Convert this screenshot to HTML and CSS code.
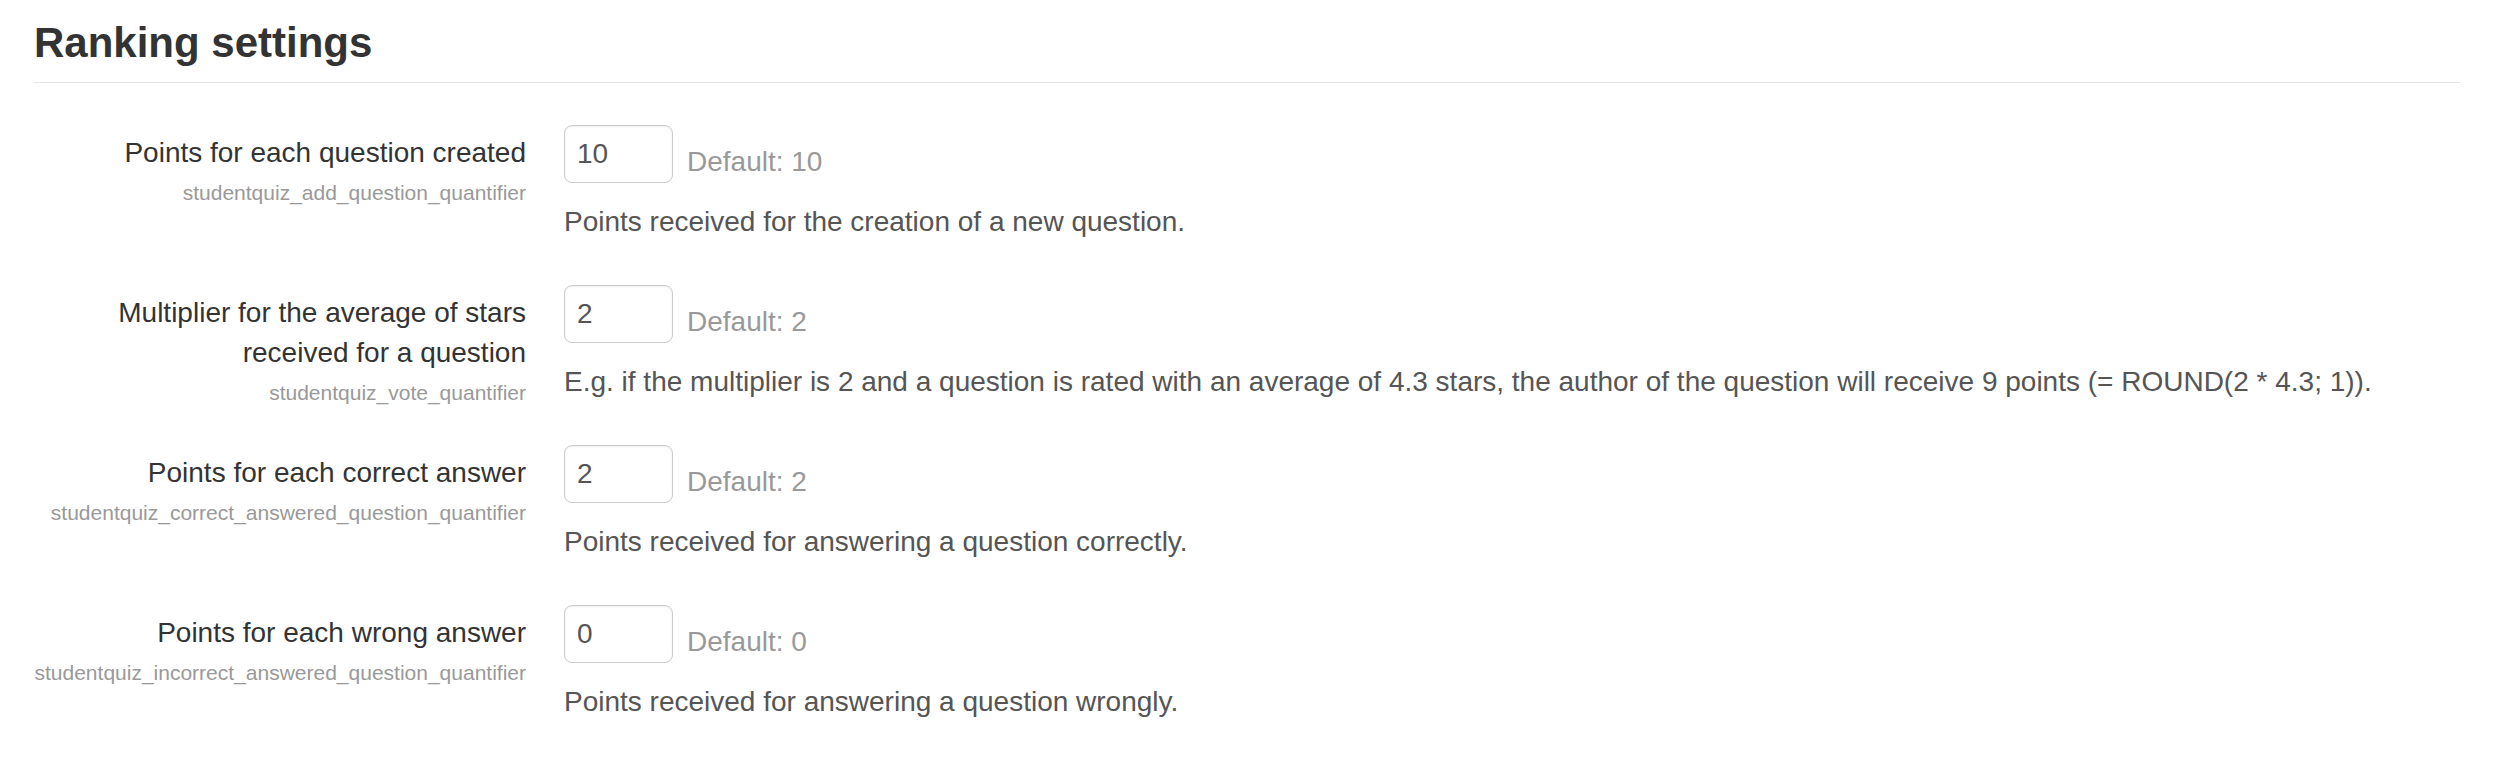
FILE: index.html
```html
<!DOCTYPE html>
<html lang="en">
<head>
<meta charset="utf-8">
<title>Ranking settings</title>
<link rel="stylesheet" href="styles.css">
</head>
<body>
<div class="page">
  <h2 class="section-title">Ranking settings</h2>
  <div class="settings">
    <div class="setting">
      <div class="label-col">
        <label class="label" for="s1">Points for each question created</label>
        <span class="shortname">studentquiz_add_question_quantifier</span>
      </div>
      <div class="field-col">
        <div class="field-line">
          <input class="num" id="s1" type="text" value="10">
          <span class="default">Default: 10</span>
        </div>
        <div class="desc">Points received for the creation of a new question.</div>
      </div>
    </div>
    <div class="setting">
      <div class="label-col">
        <label class="label" for="s2">Multiplier for the average of stars received for a question</label>
        <span class="shortname">studentquiz_vote_quantifier</span>
      </div>
      <div class="field-col">
        <div class="field-line">
          <input class="num" id="s2" type="text" value="2">
          <span class="default">Default: 2</span>
        </div>
        <div class="desc">E.g. if the multiplier is 2 and a question is rated with an average of 4.3 stars, the author of the question will receive 9 points (= ROUND(2 * 4.3; 1)).</div>
      </div>
    </div>
    <div class="setting">
      <div class="label-col">
        <label class="label" for="s3">Points for each correct answer</label>
        <span class="shortname">studentquiz_correct_answered_question_quantifier</span>
      </div>
      <div class="field-col">
        <div class="field-line">
          <input class="num" id="s3" type="text" value="2">
          <span class="default">Default: 2</span>
        </div>
        <div class="desc">Points received for answering a question correctly.</div>
      </div>
    </div>
    <div class="setting">
      <div class="label-col">
        <label class="label" for="s4">Points for each wrong answer</label>
        <span class="shortname">studentquiz_incorrect_answered_question_quantifier</span>
      </div>
      <div class="field-col">
        <div class="field-line">
          <input class="num" id="s4" type="text" value="0">
          <span class="default">Default: 0</span>
        </div>
        <div class="desc">Points received for answering a question wrongly.</div>
      </div>
    </div>
  </div>
</div>
</body>
</html>
```

FILE: styles.css
```css
html, body {
  margin: 0;
  padding: 0;
  background: #ffffff;
}

body {
  font-family: "Liberation Sans", Arial, Helvetica, sans-serif;
  color: #333333;
}

.page {
  padding: 20px 34px 0 34px;
}

.section-title {
  margin: 0;
  font-size: 42px;
  line-height: 46px;
  font-weight: bold;
  color: #333333;
  padding-bottom: 16px;
  border-bottom: 1px solid #e5e5e5;
}

.settings {
  margin-top: 42px;
  display: flex;
  flex-direction: column;
  gap: 43px;
}

.setting {
  display: flex;
  align-items: flex-start;
}

.label-col {
  width: 492px;
  flex: none;
  display: flex;
  flex-direction: column;
  align-items: flex-end;
  text-align: right;
  padding-top: 8px;
}

.label {
  display: block;
  font-size: 28px;
  line-height: 40px;
  color: #333333;
}

.shortname {
  display: block;
  font-size: 21px;
  line-height: 18px;
  margin-top: 11px;
  color: #999999;
  white-space: nowrap;
}

.field-col {
  margin-left: 38px;
  flex: 1;
  min-width: 0;
}

.field-line {
  display: flex;
  align-items: flex-start;
}

.num {
  box-sizing: border-box;
  width: 109px;
  height: 58px;
  margin: 0;
  padding: 0 12px;
  border: 1px solid #cccccc;
  border-radius: 8px;
  box-shadow: inset 0 1px 2px rgba(0, 0, 0, 0.075);
  font-family: "Liberation Sans", Arial, Helvetica, sans-serif;
  font-size: 28px;
  color: #555555;
  background: #ffffff;
  outline: none;
}

.default {
  margin-left: 14px;
  margin-top: 17px;
  font-size: 28px;
  line-height: 40px;
  color: #999999;
}

.desc {
  margin-top: 19px;
  font-size: 28px;
  line-height: 40px;
  color: #555555;
  white-space: nowrap;
}
```
